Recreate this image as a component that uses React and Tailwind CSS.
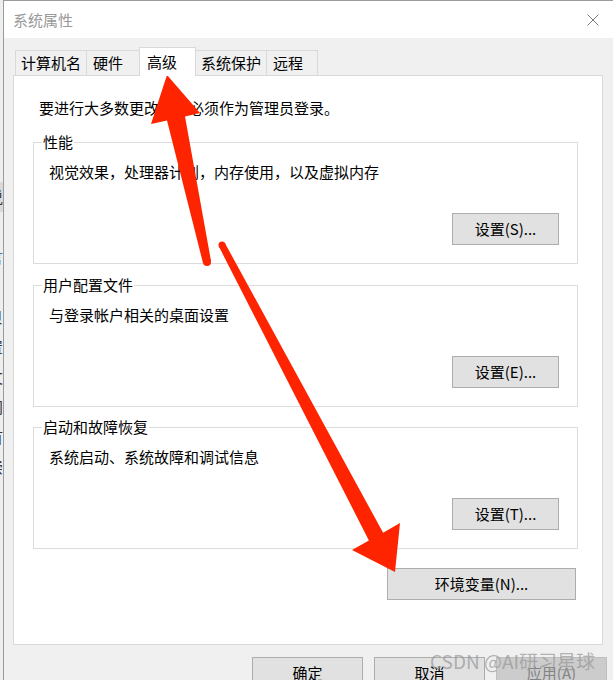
import React from "react";

const Btn = ({ children, className = "" }) => (
  <button
    className={`h-[32px] shrink-0 border border-[#adadad] bg-[#e1e1e1] text-[15px] leading-[20px] text-black flex items-center justify-center ${className}`}
  >
    {children}
  </button>
);

const Group = ({ title, text, btn }) => (
  <fieldset className="border border-[#dcdcdc] pb-[18px] min-w-0">
    <legend className="ml-[8px] px-[1px] text-[15px] leading-[20px] text-black">{title}</legend>
    <div className="mt-[10px] pl-[15px] text-[15px] leading-[20px] text-black">{text}</div>
    <div className="mt-[31px] pr-[18px] flex justify-end">
      <Btn className="w-[107px]">{btn}</Btn>
    </div>
  </fieldset>
);

const strip = [
  { c: "说", k: "text-[#333]" },
  { c: "r", k: "text-[#2a6ab8]" },
  { c: "言", k: "text-[#3a6ea5]" },
  { c: "3", k: "text-[#333]" },
  { c: "贝", k: "text-[#333]" },
  { c: "置", k: "text-[#333]" },
  { c: "攵", k: "text-[#333]" },
  { c: "门", k: "text-[#333]" },
  { c: "首", k: "text-[#333]" },
  { c: "崇", k: "text-[#333]" },
  { c: "/", k: "text-[#333]" },
  { c: "C", k: "text-[#333]" },
  { c: "R", k: "text-[#333]" },
  { c: "", k: "text-[#333]" },
  { c: "纟", k: "text-[#8a5a10]" },
];

export default function App() {
  return (
    <div className="relative w-[613px] h-[680px] overflow-hidden flex items-start bg-[#f0f0f0] font-['Noto_Sans_CJK_SC','Microsoft_YaHei',sans-serif]">
      {/* background window sliver */}
      <div className="w-[3px] h-[680px] shrink-0 overflow-hidden bg-[#eeeeee] flex flex-col">
        <div className="h-[182px] shrink-0" />
        <div className="-ml-[12px] w-[15px] text-[15px] leading-[30px] flex flex-col">
          {strip.map((s, i) => (
            <div key={i} className={`h-[30px] shrink-0 ${i === 0 ? "bg-[#d9d9d9]" : ""} ${s.k}`}>
              {s.c}
            </div>
          ))}
        </div>
      </div>

      {/* window */}
      <div className="flex-1 min-w-0 h-[720px] shrink-0 flex flex-col border-l border-t border-[#9b9b9b]">
        {/* title bar */}
        <div className="h-[37px] shrink-0 bg-white flex items-center justify-between pl-[9px] pr-[14px]">
          <span className="text-[15px] leading-[20px] text-[#999999]">系统属性</span>
          <svg width="12" height="12" viewBox="0 0 12 12">
            <path d="M0.5 0.5 L11.5 11.5 M11.5 0.5 L0.5 11.5" stroke="#7a7a7a" strokeWidth="1" />
          </svg>
        </div>

        {/* body */}
        <div className="flex-1 shrink-0 bg-[#f0f0f0] pl-[9px] pr-[10px] pt-[9px] flex flex-col">
          {/* tabs */}
          <div className="flex items-start h-[28px] shrink-0 pl-[2px] text-[15px] leading-[20px] text-black">
            <div className="mt-[3px] h-[25px] w-[71px] border-l border-t border-[#d9d9d9] flex items-center pl-[5px]">计算机名</div>
            <div className="mt-[3px] h-[25px] w-[53px] border-l border-t border-[#d9d9d9] flex items-center pl-[6px]">硬件</div>
            <div className="relative z-10 h-[29px] w-[57px] bg-white border-l border-t border-r border-[#d9d9d9] flex items-center pl-[7px] pb-[1px]">高级</div>
            <div className="mt-[3px] h-[25px] w-[70px] border-t border-[#d9d9d9] flex items-center pl-[5px]">系统保护</div>
            <div className="mt-[3px] h-[25px] w-[52px] border-l border-t border-r border-[#d9d9d9] flex items-center pl-[6px]">远程</div>
          </div>

          {/* panel */}
          <div className="h-[570px] shrink-0 bg-white border border-[#d9d9d9] pt-[22px] pl-[19px] pr-[24px] flex flex-col">
            <div className="ml-[6px] text-[15px] leading-[20px] text-black">要进行大多数更改，你必须作为管理员登录。</div>
            <div className="mt-[14px] shrink-0">
              <Group title="性能" text="视觉效果，处理器计划，内存使用，以及虚拟内存" btn="设置(S)..." />
            </div>
            <div className="mt-[11px] shrink-0">
              <Group title="用户配置文件" text="与登录帐户相关的桌面设置" btn="设置(E)..." />
            </div>
            <div className="mt-[10px] shrink-0">
              <Group title="启动和故障恢复" text="系统启动、系统故障和调试信息" btn="设置(T)..." />
            </div>
            <div className="mt-[19px] shrink-0 flex justify-end pr-[2px]">
              <Btn className="w-[189px]">环境变量(N)...</Btn>
            </div>
          </div>

          {/* bottom buttons */}
          <div className="mt-[12px] shrink-0 flex justify-end gap-[11px] -mr-[4px]">
            <Btn className="w-[111px]">确定</Btn>
            <Btn className="w-[111px]">取消</Btn>
            <button className="h-[32px] w-[111px] shrink-0 border border-[#bfbfbf] bg-[#cccccc] text-[15px] leading-[20px] text-[#838383] flex items-center justify-center">
              应用(A)
            </button>
          </div>
        </div>
      </div>

      {/* annotation arrows */}
      <svg className="absolute left-0 top-0 pointer-events-none" width="613" height="680" viewBox="0 0 613 680">
        <polygon
          fill="#ff2400"
          points="167,75 200,113 185,116.5 211,261 203,263 167,120.5 151,124"
        />
        <circle cx="207" cy="262" r="4" fill="#ff2400" />
        <polygon
          fill="#ff2400"
          points="395,572 352,550 368.9,540.4 218.9,246.6 225.1,243.4 383.1,532.7 400,523"
        />
        <circle cx="222" cy="245" r="3.5" fill="#ff2400" />
      </svg>

      {/* watermark */}
      <div className="absolute left-[430px] top-[647px] text-[19px] leading-[28px] text-[rgba(150,150,150,0.7)] whitespace-nowrap pointer-events-none">
        CSDN @AI研习星球
      </div>
    </div>
  );
}
